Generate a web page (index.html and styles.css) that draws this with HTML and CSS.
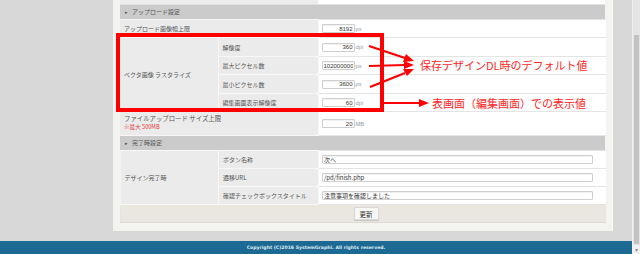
FILE: index.html
```html
<!DOCTYPE html>
<html lang="ja">
<head>
  <meta charset="UTF-8">
  <title>設定</title>
  <link rel="stylesheet" href="styles.css">
</head>
<body>
  <div class="page">
    <div class="main">
      <div class="stage">
        <div class="panel">
          <div class="stub"><span class="stub-label"></span><span class="stub-value"></span></div>
          <div class="section"><span class="bullet">▸</span>アップロード設定</div>
          <table class="form">
            <colgroup><col class="c-group"><col class="c-sub"><col class="c-value"></colgroup>
            <tr>
              <th colspan="2">アップロード画像幅上限</th>
              <td><input class="num" value="8192"><span class="unit">px</span></td>
            </tr>
            <tr class="tall1">
              <th rowspan="4">ベクタ画像 ラスタライズ</th>
              <th>解像度</th>
              <td><input class="num" value="360"><span class="unit">dpi</span></td>
            </tr>
            <tr>
              <th>最大ピクセル数</th>
              <td><input class="num" value="102000000"><span class="unit">px</span></td>
            </tr>
            <tr class="tall1">
              <th>最小ピクセル数</th>
              <td><input class="num" value="3600"><span class="unit">px</span></td>
            </tr>
            <tr>
              <th>編集画面表示解像度</th>
              <td><input class="num" value="60"><span class="unit">dpi</span></td>
            </tr>
            <tr class="tall2">
              <th colspan="2" class="top">ファイルアップロード サイズ上限<br><span class="note">※最大 500MB</span></th>
              <td><input class="num" value="20"><span class="unit">MB</span></td>
            </tr>
          </table>
          <div class="section"><span class="bullet">▸</span>完了時設定</div>
          <table class="form">
            <colgroup><col class="c-group"><col class="c-sub"><col class="c-value"></colgroup>
            <tr>
              <th rowspan="3">デザイン完了時</th>
              <th>ボタン名称</th>
              <td><input class="text" value="次へ"></td>
            </tr>
            <tr>
              <th>遷移URL</th>
              <td><input class="text" value="/pd/finish.php"></td>
            </tr>
            <tr>
              <th>確認チェックボックスタイトル</th>
              <td><input class="text" value="注意事項を確認しました"></td>
            </tr>
            <tr class="actions">
              <td colspan="3"><button type="button">更新</button></td>
            </tr>
          </table>
        </div>

        <div class="callout box"></div>
        <svg class="callout arrows" width="80" height="80" viewBox="360 40 80 80">
          <g stroke="#ff0000" stroke-width="2.2" fill="none">
            <line x1="369" y1="46" x2="405" y2="58"/>
            <line x1="369" y1="66" x2="405" y2="65"/>
            <line x1="370" y1="87" x2="405" y2="73"/>
            <line x1="380" y1="103" x2="421" y2="103"/>
          </g>
          <g fill="#ff0000">
            <polygon points="414,61 403,62 406,54"/>
            <polygon points="414,65 404,69 404,61"/>
            <polygon points="414,69 407,76 403,69"/>
            <polygon points="429,103 419,107 419,99"/>
          </g>
        </svg>
        <p class="callout note-default">保存デザインDL時のデフォルト値</p>
        <p class="callout note-view">表画面（編集画面）での表示値</p>
      </div>
      <footer class="footer">Copyright (C)2016 SystemGraphi. All rights reserved.</footer>
    </div>
    <div class="scrollbar">
      <div class="thumb"></div>
      <div class="arrow">▾</div>
    </div>
  </div>
</body>
</html>
```

FILE: styles.css
```css
* {
  box-sizing: border-box;
}
body {
  margin: 0;
  font-family: "Noto Sans CJK JP", "Noto Sans", sans-serif;
  color: #555;
  background: #d8d8d8;
}
.page {
  display: flex;
  width: 640px;
  height: 254px;
  overflow: hidden;
}
.main {
  flex: 1;
  display: flex;
  flex-direction: column;
}
.stage {
  position: relative;
  height: 241px;
  padding-left: 113px;
  background: #d8d8d8;
}
.panel {
  width: 500px;
  padding: 0 7px 8px;
  background: #f3f3ef;
  border-right: 1px solid #fbfbf9;
}
.stub {
  display: flex;
  height: 5px;
  border-bottom: 1px solid #e0e0e0;
}
.stub-label {
  width: 198px;
  background: #ececec;
}
.stub-value {
  flex: 1;
  background: #fff;
}
.section {
  height: 14px;
  line-height: 14px;
  padding-left: 5px;
  background: #cbcbcb;
  font-size: 6px;
  color: #555;
}
.bullet {
  font-size: 5px;
  margin-right: 4px;
}
.form {
  width: 486px;
  border-collapse: collapse;
  table-layout: fixed;
  font-size: 6px;
}
.c-group { width: 98px; }
.c-sub { width: 100px; }
.form tr {
  height: 18px;
}
.form tr.tall1 {
  height: 19px;
}
.form tr.tall2 {
  height: 24px;
}
.form th {
  background: #ebebeb;
  font-weight: normal;
  text-align: left;
  padding: 0 4px;
  border: 1px solid #f7f7f7;
  border-left: 0;
  white-space: nowrap;
}
.form th.top {
  vertical-align: top;
  padding-top: 3px;
  font-size: 6.4px;
  line-height: 8px;
}
.form td {
  background: #fff;
  padding: 0 3px;
  border: 1px solid #e4e4e4;
  border-right: 0;
}
.note {
  color: #e8333a;
  font-size: 5.6px;
}
input {
  font-family: "Liberation Sans", "Noto Sans CJK JP", sans-serif;
  font-size: 6px;
  color: #333;
  border: 1px solid #cfcfcf;
  border-radius: 1px;
  padding: 0 1px;
  background: #fff;
  vertical-align: middle;
  box-shadow: inset 0 1px 1px rgba(0, 0, 0, 0.06);
}
input.num {
  width: 33px;
  height: 9px;
  text-align: right;
}
input.text {
  width: 271px;
  height: 9px;
  font-family: "Noto Sans CJK JP", sans-serif;
}
.unit {
  font-family: "Liberation Sans", sans-serif;
  font-size: 5.8px;
  color: #999;
  margin-left: 1px;
  vertical-align: middle;
}
.actions td {
  height: 17px;
  background: #e9e7e0;
  text-align: center;
  border-bottom: 1px solid #dedbd2;
}
button {
  font-family: "Noto Sans CJK JP", sans-serif;
  font-size: 6.5px;
  color: #333;
  height: 13px;
  width: 25px;
  padding: 0;
  margin-left: 5px;
  border: 1px solid #d8d8d8;
  border-radius: 1px;
  background: #f7f7f5;
  box-shadow: 0 1px 1px rgba(0, 0, 0, 0.15);
}
.callout {
  position: absolute;
  margin: 0;
}
.box {
  left: 116px;
  top: 33px;
  width: 268px;
  height: 79px;
  border: 4px solid #ff0000;
}
.arrows {
  left: 360px;
  top: 40px;
}
.note-default,
.note-view {
  font-size: 11px;
  line-height: 14px;
  color: #ff2626;
  white-space: nowrap;
}
.note-default {
  left: 420px;
  top: 58px;
}
.note-view {
  left: 432px;
  top: 96px;
}
.footer {
  height: 13px;
  line-height: 13px;
  background: #1c6a93;
  color: #dfe9ef;
  text-align: center;
  font-family: "DejaVu Sans", sans-serif;
  font-size: 4.6px;
  font-weight: bold;
}
.scrollbar {
  position: relative;
  width: 8px;
  background: #e4e4e4;
  border-left: 1px solid #f0f0f0;
}
.thumb {
  position: absolute;
  left: 1px;
  right: 1px;
  top: 35px;
  bottom: 10px;
  background: #c3c3c3;
}
.arrow {
  position: absolute;
  left: 0;
  right: 0;
  bottom: 0;
  height: 9px;
  background: #f1f1f1;
  color: #888;
  font-size: 6px;
  line-height: 9px;
  text-align: center;
}
```
